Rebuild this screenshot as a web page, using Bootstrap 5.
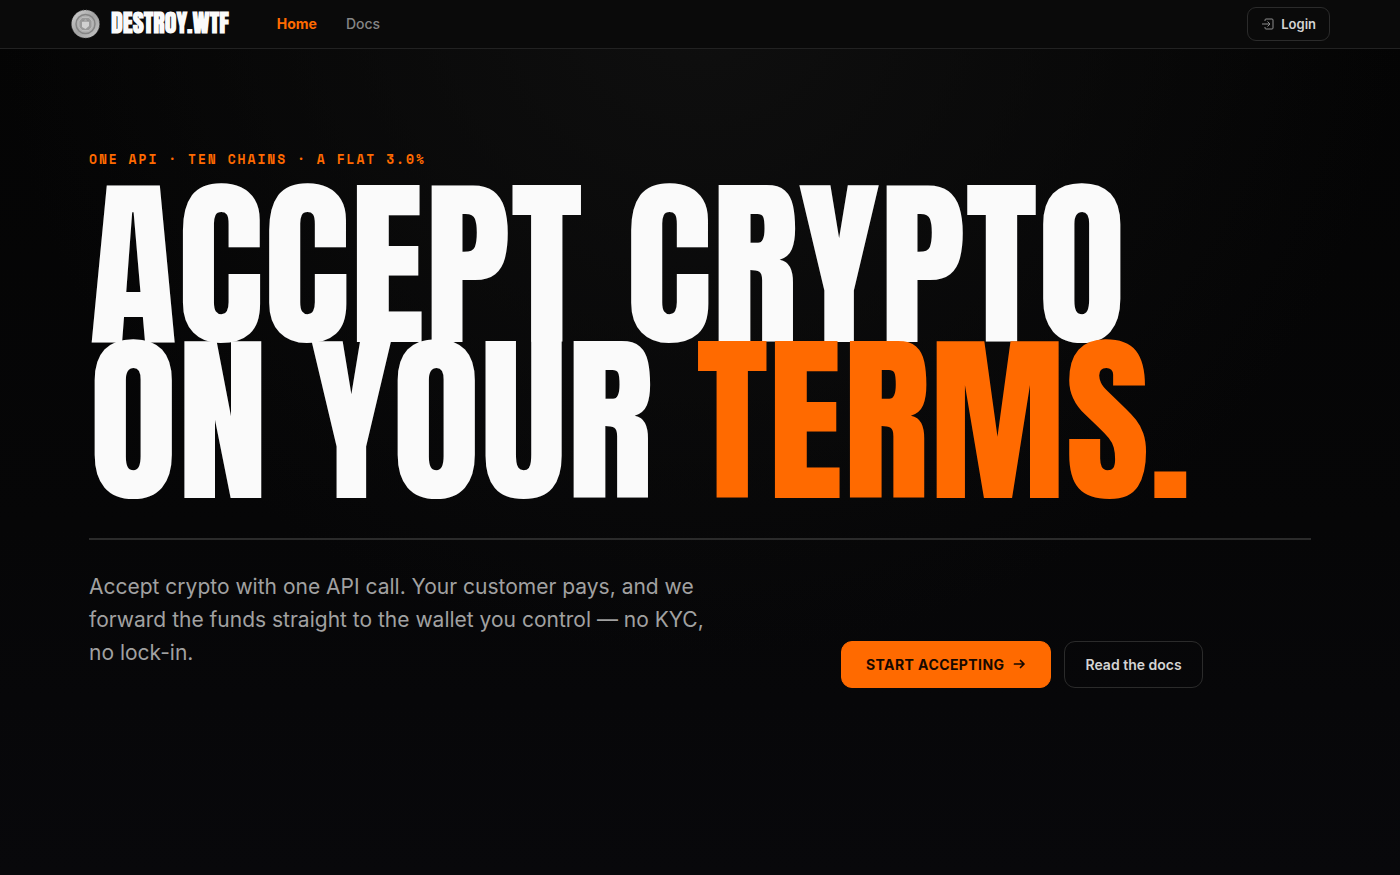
<!DOCTYPE html>
<html lang="en" data-bs-theme="dark">
<head>
<meta charset="utf-8">
<meta name="viewport" content="width=device-width, initial-scale=1">
<title>DESTROY.WTF</title>
<link href="https://cdn.jsdelivr.net/npm/bootstrap@5.3.0/dist/css/bootstrap.min.css" rel="stylesheet">
<style>
  :root { --accent: #ff6a00; --ink: #fafafa; }
  body {
    font-family: Inter, "Liberation Sans", sans-serif;
    color: var(--ink);
    background: radial-gradient(ellipse 50% 75% at 50% 0, #0f0f0f, transparent) no-repeat, linear-gradient(#040404, #060607 60%, #08080b) #08080b;
  }
  .shell { max-width: 1260px; }
  .topbar { height: 49px; background: #0a0a0a; border-bottom: 1px solid #222; }
  .display-face { font-family: Anton, "Liberation Sans Narrow", sans-serif; font-weight: 400; text-transform: uppercase; color: var(--ink); }
  .brand-link { gap: 9px; margin-right: 48px; }
  .brand-name { font-size: 24px; line-height: 28px; padding-bottom: 2px; font-weight: 700; }
  .main-nav { gap: 29px; }
  .topbar .nav-link { font-size: 14px; line-height: 20px; font-weight: 500; color: #858585; padding: 0; }
  .topbar .nav-link.active { color: var(--accent); font-weight: 700; }
  .btn-line { --bs-btn-color: #d4d4d4; --bs-btn-border-color: #2b2b2b; --bs-btn-hover-color: #fff; --bs-btn-hover-border-color: #555; --bs-btn-font-weight: 600; }
  .btn-login { font-size: 13px; line-height: 20px; padding: 6px 13px; border-radius: 9px; gap: 6px; }
  .hero { max-width: 1222px; padding-top: 100px; padding-bottom: 100px; }
  .eyebrow { font-family: "Space Mono", "Liberation Mono", monospace; font-size: 13px; line-height: 20px; font-weight: 700; letter-spacing: .15em; color: var(--accent); }
  .headline { font-size: clamp(48px, 13vw, 182px); line-height: .857; margin-top: 19px; }
  .headline em { font-style: normal; color: var(--accent); }
  .rule { border-top: 2px solid #2b2b2b; margin-top: 38px; }
  .lower { padding-top: 30px; }
  .pitch { font-size: 21px; line-height: 33px; color: #a1a1a1; max-width: 640px; margin-bottom: 19px; }
  .cta-row { gap: 13px; }
  .btn-cta { font-size: 14px; line-height: 21px; padding: 12px 24px; border-radius: 11px; letter-spacing: .03em; --bs-btn-font-weight: 700; --bs-btn-color: #160800; --bs-btn-bg: #ff6a00; --bs-btn-border-color: #ff6a00; --bs-btn-hover-bg: #ff8126; --bs-btn-hover-color: #160800; gap: 8px; }
  .btn-docs { font-size: 14px; line-height: 21px; padding: 12px 20px; border-radius: 11px; }
  @media (min-width: 992px) {
    .lower { display: grid; grid-template-columns: 8fr 5fr; align-items: end; }
  }
</style>
</head>
<body class="min-vh-100">
<header class="topbar">
  <div class="shell container-fluid px-0 h-100 d-flex align-items-center">
    <a href="#" class="brand-link d-flex align-items-center text-decoration-none">
      <svg width="32" height="32" viewBox="0 0 32 32" aria-hidden="true">
        <defs><linearGradient id="steel" x1="0" y1="0" x2="1" y2="1"><stop offset="0" stop-color="#d6d6d6"/><stop offset=".5" stop-color="#a2a2a2"/><stop offset="1" stop-color="#c8c8c8"/></linearGradient></defs>
        <circle cx="15.500" cy="16" r="14" fill="url(#steel)"/>
        <circle cx="15.500" cy="16" r="14" fill="none" stroke="#666" stroke-dasharray="1 2"/>
        <circle cx="15.500" cy="16" r="9.500" fill="#b0b0b0" stroke="#858585" stroke-width="1.500"/>
        <path d="M12 9.500h7l3 3.500v6l-3 3.500h-7L9 19v-6z" fill="#999" stroke="#bbb"/>
        <path d="M12 14l3.500-2.500 3.500 2.500v4l-3.500 3-3.500-2z" fill="#d0d0d0"/>
        <path d="M12.500 13h6" stroke="#808080"/>
      </svg>
      <span class="display-face brand-name">Destroy.wtf</span>
    </a>
    <nav class="nav main-nav" aria-label="Main">
      <a class="nav-link active" aria-current="page" href="#">Home</a>
      <a class="nav-link" href="#docs">Docs</a>
    </nav>
    <button type="button" class="btn btn-line btn-login d-inline-flex align-items-center ms-auto">
      <svg width="14" height="14" viewBox="0 0 14 14" fill="none" stroke="#8c8c8c" aria-hidden="true"><path d="M4 4V3q0-1 1-1h6q1 0 1 1v8q0 1-1 1H5q-1 0-1-1v-1M1 7h7.500M6.500 4.500L9 7 6.500 9.500"/></svg>
      Login
    </button>
  </div>
</header>
<main class="hero container-fluid px-0">
  <p class="eyebrow mb-0">ONE API · TEN CHAINS · A FLAT 3.0%</p>
  <h1 class="headline display-face mb-0">Accept crypto<br>on your <em>terms.</em></h1>
  <div class="rule"></div>
  <div class="lower">
    <p class="pitch">Accept crypto with one API call. Your customer pays, and we forward the funds straight to the wallet you control — no KYC, no lock-in.</p>
    <div class="cta-row d-flex flex-wrap">
      <button type="button" class="btn btn-cta d-inline-flex align-items-center">START ACCEPTING
        <svg width="14" height="14" viewBox="0 0 14 14" fill="none" stroke="currentColor" stroke-width="1.700" stroke-linecap="round" stroke-linejoin="round" aria-hidden="true"><path d="M2.500 7h9.500M8.500 3.500L12 7l-3.500 3.500"/></svg>
      </button>
      <a href="#docs" class="btn btn-line btn-docs">Read the docs</a>
    </div>
  </div>
</main>
<script src="https://cdn.jsdelivr.net/npm/bootstrap@5.3.0/dist/js/bootstrap.bundle.min.js"></script>
</body>
</html>
